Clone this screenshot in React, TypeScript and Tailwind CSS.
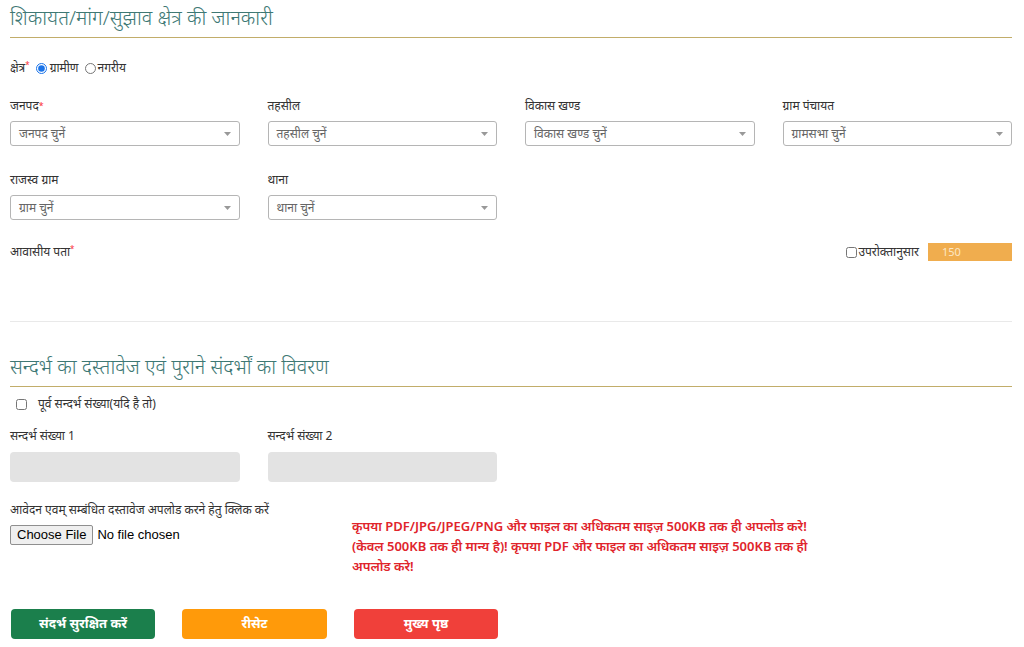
import React, { useState } from 'react';

const fontStack = { fontFamily: '"Noto Sans", "Liberation Sans", Arial, sans-serif' };

const SelectBox: React.FC<{ label: string; placeholder: string; required?: boolean }> = ({ label, placeholder, required }) => (
    <div className="flex flex-col">
        <label className="text-[12px] leading-[18px] text-[#333] h-[18px]">
            {label}{required && <span className="text-red-500 text-[9px] align-top">*</span>}
        </label>
        <div className="mt-[6px] h-[25px] border border-[#b5b5b5] rounded-[3px] flex items-center justify-between pl-[8px] pr-[8px] bg-white">
            <span className="text-[12px] text-[#666]">{placeholder}</span>
            <svg width="7" height="4" viewBox="0 0 7 4"><path d="M0 0h7L3.5 4z" fill="#999" /></svg>
        </div>
    </div>
);

const SectionTitle: React.FC<{ children: React.ReactNode }> = ({ children }) => (
    <h2 className="text-[20px] leading-[28px] text-[#3e7874] pb-[5px] border-b border-[#c2ad6a] font-light">{children}</h2>
);

export default function App() {
    const [area, setArea] = useState('gramin');

    return (
        <div className="bg-white w-[1024px] h-[647px] overflow-hidden px-[10px] text-[#333]" style={fontStack}>
            {/* section 1 */}
            <div className="pt-[4px] w-[1002px]">
                <SectionTitle>शिकायत/मांग/सुझाव क्षेत्र की जानकारी</SectionTitle>

                <div className="mt-[21px] flex items-center text-[12px] h-[18px]">
                    <span>क्षेत्र<span className="text-red-500 text-[8px] align-top">*</span></span>
                    <label className="ml-[6px] flex items-center">
                        <input type="radio" checked={area === 'gramin'} onChange={() => setArea('gramin')} className="w-[11px] h-[11px] m-0 mr-[3px] accent-[#1a73e8]" />
                        ग्रामीण
                    </label>
                    <label className="ml-[6px] flex items-center">
                        <input type="radio" checked={area === 'nagriya'} onChange={() => setArea('nagriya')} className="w-[11px] h-[11px] m-0 mr-[2px]" />
                        नगरीय
                    </label>
                </div>

                <div className="mt-[20px] grid grid-cols-4 gap-x-[28px] gap-y-[25px]">
                    <SelectBox label="जनपद" placeholder="जनपद चुनें" required />
                    <SelectBox label="तहसील" placeholder="तहसील चुनें" />
                    <SelectBox label="विकास खण्ड" placeholder="विकास खण्ड चुनें" />
                    <SelectBox label="ग्राम पंचायत" placeholder="ग्रामसभा चुनें" />
                    <SelectBox label="राजस्व ग्राम" placeholder="ग्राम चुनें" />
                    <SelectBox label="थाना" placeholder="थाना चुनें" />
                </div>

                <div className="mt-[22px] flex items-center justify-between h-[20px]">
                    <span className="text-[12px]">आवासीय पता<span className="text-red-500 text-[8px] align-top">*</span></span>
                    <div className="flex items-center">
                        <input type="checkbox" className="w-[11px] h-[11px] m-0" />
                        <span className="text-[12px] ml-[1px]">उपरोक्तानुसार</span>
                        <div className="ml-[9px] w-[84px] h-[18px] bg-[#f0ad4e] text-[#fde7c4] text-[11px] leading-[18px] pl-[14px]">150</div>
                    </div>
                </div>

                <div className="mt-[59px] border-t border-[#e9e9e9]" />
            </div>

            {/* section 2 */}
            <div className="mt-[31px] w-[1002px]">
                <SectionTitle>सन्दर्भ का दस्तावेज एवं पुराने संदर्भों का विवरण</SectionTitle>

                <label className="mt-[8px] ml-[6px] flex items-center text-[12px] h-[18px]">
                    <input type="checkbox" className="w-[11px] h-[11px] m-0 mr-[11px]" />
                    पूर्व सन्दर्भ संख्या(यदि है तो)
                </label>

                <div className="mt-[14px] grid grid-cols-4 gap-x-[28px]">
                    <div>
                        <div className="text-[12px] leading-[18px]">सन्दर्भ संख्या 1</div>
                        <div className="mt-[7px] h-[30px] bg-[#e3e3e3] rounded-[4px]" />
                    </div>
                    <div>
                        <div className="text-[12px] leading-[18px]">सन्दर्भ संख्या 2</div>
                        <div className="mt-[7px] h-[30px] bg-[#e3e3e3] rounded-[4px]" />
                    </div>
                </div>

                <div className="mt-[19px] flex">
                    <div className="w-[342px]">
                        <div className="text-[12px] leading-[18px]">आवेदन एवम् सम्बंधित दस्तावेज अपलोड करने हेतु क्लिक करें</div>
                        <div className="mt-[6px] flex items-center">
                            <button className="h-[20px] px-[6px] text-[13px] leading-[18px] border border-[#8f8f8f] rounded-[2px] bg-[#efefef] text-black" style={{ fontFamily: '"Liberation Sans", Arial, sans-serif' }}>Choose File</button>
                            <span className="ml-[4px] text-[13px] text-black" style={{ fontFamily: '"Liberation Sans", Arial, sans-serif' }}>No file chosen</span>
                        </div>
                    </div>
                    <p className="mt-[15px] w-[466px] text-[13px] leading-[20px] text-[#e0242b] font-semibold">
                        कृपया PDF/JPG/JPEG/PNG और फाइल का अधिकतम साइज़ 500KB तक ही अपलोड करे! (केवल 500KB तक ही मान्य है)! कृपया PDF और फाइल का अधिकतम साइज़ 500KB तक ही अपलोड करे!
                    </p>
                </div>

                <div className="mt-[33px] flex gap-[27px] ml-[1px]">
                    <button className="w-[144px] h-[30px] rounded-[4px] bg-[#1b7f4c] text-white text-[13px] font-bold">संदर्भ सुरक्षित करें</button>
                    <button className="w-[145px] h-[30px] rounded-[4px] bg-[#ff9a0a] text-white text-[13px] font-bold">रीसेट</button>
                    <button className="w-[144px] h-[30px] rounded-[4px] bg-[#f0403a] text-white text-[13px] font-bold">मुख्य पृष्ठ</button>
                </div>
            </div>
        </div>
    );
}
